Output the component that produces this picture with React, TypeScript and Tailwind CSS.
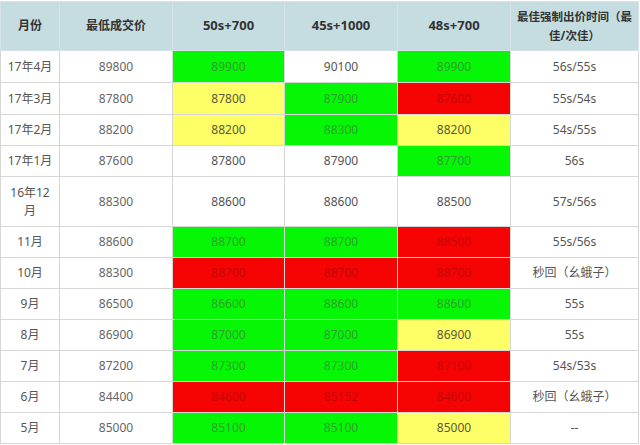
type Tone = "g" | "y" | "r" | "w";

const rows: { month: React.ReactNode; low: string; cells: [string, Tone][]; best: string; h: string }[] = [
  { month: "17年4月", low: "89800", cells: [["89900", "g"], ["90100", "w"], ["89900", "g"]], best: "56s/55s", h: "h-[32px]" },
  { month: "17年3月", low: "87800", cells: [["87800", "y"], ["87900", "g"], ["87600", "r"]], best: "55s/54s", h: "h-[32px]" },
  { month: "17年2月", low: "88200", cells: [["88200", "y"], ["88300", "g"], ["88200", "y"]], best: "54s/55s", h: "h-[31px]" },
  { month: "17年1月", low: "87600", cells: [["87800", "w"], ["87900", "w"], ["87700", "g"]], best: "56s", h: "h-[31px]" },
  {
    month: (
      <>
        16年12
        <br />月
      </>
    ),
    low: "88300",
    cells: [["88600", "w"], ["88600", "w"], ["88500", "w"]],
    best: "57s/56s",
    h: "h-[50px]",
  },
  { month: "11月", low: "88600", cells: [["88700", "g"], ["88700", "g"], ["88500", "r"]], best: "55s/56s", h: "h-[31px]" },
  { month: "10月", low: "88300", cells: [["88700", "r"], ["88700", "r"], ["88700", "r"]], best: "秒回（幺蛾子）", h: "h-[31px]" },
  { month: "9月", low: "86500", cells: [["86600", "g"], ["88600", "g"], ["88600", "g"]], best: "55s", h: "h-[31px]" },
  { month: "8月", low: "86900", cells: [["87000", "g"], ["87000", "g"], ["86900", "y"]], best: "55s", h: "h-[31px]" },
  { month: "7月", low: "87200", cells: [["87300", "g"], ["87300", "g"], ["87100", "r"]], best: "54s/53s", h: "h-[31px]" },
  { month: "6月", low: "84400", cells: [["84600", "r"], ["85152", "r"], ["84600", "r"]], best: "秒回（幺蛾子）", h: "h-[31px]" },
  { month: "5月", low: "85000", cells: [["85100", "g"], ["85100", "g"], ["85000", "y"]], best: "--", h: "h-[31px]" },
];

const tone: Record<Tone, string> = {
  g: "bg-[#05f705] text-[#2f9f2f]",
  y: "bg-[#fefe66] text-[#5a5a3a]",
  r: "bg-[#f60303] text-[#c40808]",
  w: "bg-white text-[#555]",
};

const cell = "border border-[#d6d6d6] text-center align-middle p-0";
const head = "border border-[#d3e3e6] text-center align-middle p-0 font-bold text-[#333]";

export default function App() {
  return (
    <div className="w-[640px] h-[445px] bg-white pt-px font-['Noto_Sans','Noto_Sans_CJK_SC',sans-serif] text-[12px]">
      <table className="w-[638px] table-fixed border-collapse">
        <colgroup>
          <col className="w-[59px]" />
          <col className="w-[113px]" />
          <col className="w-[112px]" />
          <col className="w-[113px]" />
          <col className="w-[113px]" />
          <col className="w-[128px]" />
        </colgroup>
        <thead>
          <tr className="h-[49px] bg-[#c5dde1]">
            <th className={head}>月份</th>
            <th className={head}>最低成交价</th>
            <th className={`${head} text-[13px]`}>50s+700</th>
            <th className={`${head} text-[13px]`}>45s+1000</th>
            <th className={`${head} text-[13px]`}>48s+700</th>
            <th className={`${head} text-[11.5px] leading-[19px]`}>
              最佳强制出价时间（最
              <br />
              佳/次佳）
            </th>
          </tr>
        </thead>
        <tbody>
          {rows.map((r, i) => (
            <tr key={i} className={r.h}>
              <td className={`${cell} text-[#555] leading-[18px]`}>{r.month}</td>
              <td className={`${cell} text-[#666]`}>{r.low}</td>
              {r.cells.map(([v, t], j) => (
                <td key={j} className={`${cell} ${tone[t]}`}>
                  {v}
                </td>
              ))}
              <td className={`${cell} text-[#555]`}>{r.best}</td>
            </tr>
          ))}
        </tbody>
      </table>
    </div>
  );
}
